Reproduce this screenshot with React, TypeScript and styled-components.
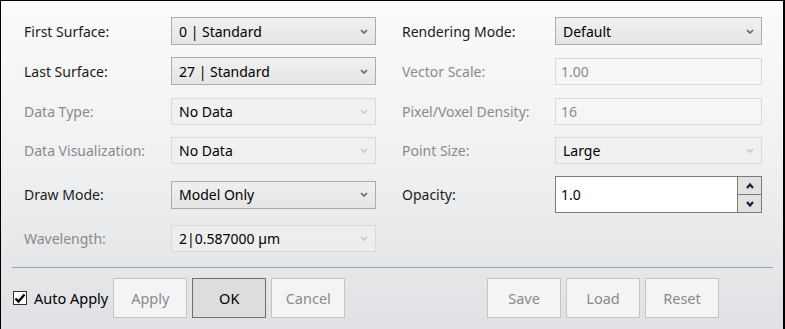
import React from "react";
import styled, { createGlobalStyle, css } from "styled-components";

const Global = createGlobalStyle`
  html, body { margin: 0; padding: 0; background: #fff; }
  * { box-sizing: border-box; }
`;

const Frame = styled.div`
  width: 785px;
  height: 329px;
  border: solid #000;
  border-width: 1px 2px 0 1px;
  background: linear-gradient(to bottom, #fbfbfb 0%, #eff0f1 50%, #dfe1e4 100%);
  display: flex;
  flex-direction: column;
  font-family: "Noto Sans", "Open Sans", sans-serif;
  font-size: 14px;
  color: #1b1b1b;
`;

const Form = styled.div`
  display: grid;
  grid-template-columns: 147px 205px 179px 207px;
  grid-template-rows: 28px 28px 28px 27px 37px 27px;
  row-gap: 12px;
  padding: 16px 0 0 23px;
`;

const Label = styled.div<{ $disabled?: boolean; $indent?: boolean }>`
  align-self: center;
  white-space: nowrap;
  padding-left: ${(p) => (p.$indent ? "26px" : "0")};
  color: ${(p) => (p.$disabled ? "#8a8a8a" : "#1b1b1b")};
`;

const SelectBox = styled.div<{ $disabled?: boolean }>`
  align-self: center;
  height: ${(p) => (p.$disabled ? "27px" : "28px")};
  display: flex;
  align-items: center;
  justify-content: space-between;
  padding: 0 7px 0 7px;
  color: #000;
  ${(p) =>
    p.$disabled
      ? css`
          border: 1px solid #d9d9d9;
          background: rgba(240, 240, 240, 0.7);
        `
      : css`
          border: 1px solid #acacac;
          background: linear-gradient(to bottom, #f0f0f0, #e5e5e5);
        `}
`;

const TextBox = styled.div`
  align-self: center;
  height: 27px;
  display: flex;
  align-items: center;
  padding: 0 5px;
  border: 1px solid #d9d9d9;
  background: rgba(246, 246, 246, 0.8);
  color: #8a8a8a;
`;

const Spinner = styled.div`
  display: flex;
  height: 37px;
`;

const SpinInput = styled.div`
  flex: 1;
  display: flex;
  align-items: center;
  padding: 0 5px;
  border: 1px solid #7a7a7a;
  border-right: none;
  background: #fff;
  color: #000;
`;

const SpinButtons = styled.div`
  width: 25px;
  display: flex;
  flex-direction: column;
  border: 1px solid #7a7a7a;
  background: #e2e2e2;
`;

const SpinButton = styled.div<{ $top?: boolean }>`
  flex: 1;
  display: flex;
  align-items: center;
  justify-content: center;
  border-top: ${(p) => (p.$top ? "none" : "1px solid #7a7a7a")};
`;

const Separator = styled.div`
  height: 1px;
  margin: 15px 10px 0 11px;
  background: #8fa9bd;
`;

const Footer = styled.div`
  display: flex;
  align-items: center;
  padding: 10px 64px 0 12px;
  gap: 5px;
`;

const CheckLabel = styled.label`
  display: flex;
  align-items: center;
  gap: 7px;
  font-size: 14.5px;
  color: #000;
`;

const CheckBox = styled.span`
  width: 14px;
  height: 14px;
  border: 1px solid #333;
  background: #fff;
  display: flex;
  align-items: center;
  justify-content: center;
`;

const Button = styled.div<{ $primary?: boolean }>`
  width: 74px;
  height: 40px;
  display: flex;
  align-items: center;
  justify-content: center;
  font-size: 14.5px;
  ${(p) =>
    p.$primary
      ? css`
          border: 1px solid #707070;
          background: #dddddd;
          color: #000;
        `
      : css`
          border: 1px solid #c4c4c4;
          background: #f4f4f4;
          color: #8a8a8a;
        `}
`;

const Spacer = styled.div`
  flex: 1;
`;

const Chevron = ({ disabled }: { disabled?: boolean }) => (
  <svg width="8" height="5" viewBox="0 0 8 5">
    <path
      d="M1 1 L4 4 L7 1"
      fill="none"
      stroke={disabled ? "#c8c8c8" : "#6a6a6a"}
      strokeWidth="1.7"
    />
  </svg>
);

const Arrow = ({ up }: { up?: boolean }) => (
  <svg width="8" height="6" viewBox="0 0 8 6">
    <path
      d={up ? "M1 5 L4 1.5 L7 5" : "M1 1 L4 4.5 L7 1"}
      fill="none"
      stroke="#13203e"
      strokeWidth="2.2"
    />
  </svg>
);

const Select = ({ value, disabled }: { value: string; disabled?: boolean }) => (
  <SelectBox $disabled={disabled}>
    <span>{value}</span>
    <Chevron disabled={disabled} />
  </SelectBox>
);

export default function App() {
  return (
    <>
      <Global />
      <Frame>
        <Form>
          <Label>First Surface:</Label>
          <Select value="0 | Standard" />
          <Label $indent>Rendering Mode:</Label>
          <Select value="Default" />

          <Label>Last Surface:</Label>
          <Select value="27 | Standard" />
          <Label $indent $disabled>Vector Scale:</Label>
          <TextBox>1.00</TextBox>

          <Label $disabled>Data Type:</Label>
          <Select value="No Data" disabled />
          <Label $indent $disabled>Pixel/Voxel Density:</Label>
          <TextBox>16</TextBox>

          <Label $disabled>Data Visualization:</Label>
          <Select value="No Data" disabled />
          <Label $indent $disabled>Point Size:</Label>
          <Select value="Large" disabled />

          <Label>Draw Mode:</Label>
          <Select value="Model Only" />
          <Label $indent>Opacity:</Label>
          <Spinner>
            <SpinInput>1.0</SpinInput>
            <SpinButtons>
              <SpinButton $top>
                <Arrow up />
              </SpinButton>
              <SpinButton>
                <Arrow />
              </SpinButton>
            </SpinButtons>
          </Spinner>

          <Label $disabled>Wavelength:</Label>
          <Select value="2|0.587000 µm" disabled />
        </Form>
        <Separator />
        <Footer>
          <CheckLabel>
            <CheckBox>
              <svg width="12" height="11" viewBox="0 0 12 11">
                <path d="M1.5 5.5 L4.5 8.5 L10.5 1.5" fill="none" stroke="#000" strokeWidth="2.4" />
              </svg>
            </CheckBox>
            Auto Apply
          </CheckLabel>
          <Button>Apply</Button>
          <Button $primary>OK</Button>
          <Button>Cancel</Button>
          <Spacer />
          <Button>Save</Button>
          <Button>Load</Button>
          <Button>Reset</Button>
        </Footer>
      </Frame>
    </>
  );
}
